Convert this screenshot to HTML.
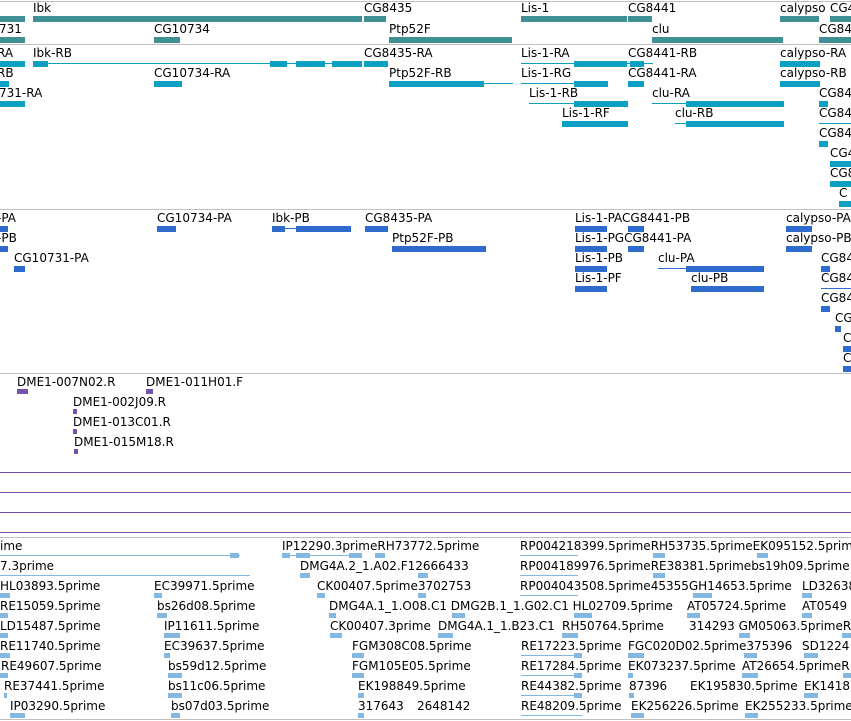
<!DOCTYPE html>
<html><head><meta charset="utf-8"><style>
body{margin:0;width:851px;height:721px;overflow:hidden;background:#fff;position:relative;font-family:"DejaVu Sans","Liberation Sans",sans-serif}
.t{position:absolute;font-size:12px;line-height:14px;white-space:nowrap;color:#000}
.b{position:absolute;height:6px}
.l{position:absolute;height:1px}
.g{background:#3f9095}.x{background:#0ea0c2}.p{background:#2f6bcc}.u{background:#7552b0}.e{background:#84b8e0}
.h{position:absolute;left:0;width:851px;height:1px;background:#c0c0c0}
.v{position:absolute;left:0;width:851px;height:1px;background:#7552b0}
</style></head><body>
<div class="h" style="top:1px"></div>
<div class="h" style="top:44px"></div>
<div class="h" style="top:209px"></div>
<div class="h" style="top:373px"></div>
<div class="v" style="top:472px"></div>
<div class="v" style="top:492px"></div>
<div class="v" style="top:512px"></div>
<div class="v" style="top:532px"></div>
<div class="h" style="top:537px"></div>
<div class="h" style="top:719px"></div>

<!-- genes -->
<div class="t" style="left:33px;top:1px">Ibk</div>
<div class="t" style="left:364px;top:1px">CG8435</div>
<div class="t" style="left:521px;top:1px">Lis-1</div>
<div class="t" style="left:628px;top:1px">CG8441</div>
<div class="t" style="left:780px;top:1px">calypso</div>
<div class="t" style="left:830px;top:1px">CG4</div>
<div class="b g" style="left:0;width:25px;top:16px"></div>
<div class="b g" style="left:33px;width:329px;top:16px"></div>
<div class="b g" style="left:364px;width:22px;top:16px"></div>
<div class="b g" style="left:521px;width:106px;top:16px"></div>
<div class="b g" style="left:628px;width:24px;top:16px"></div>
<div class="b g" style="left:780px;width:39px;top:16px"></div>
<div class="b g" style="left:830px;width:21px;top:16px"></div>
<div class="t" style="left:-1px;top:22px">731</div>
<div class="t" style="left:154px;top:22px">CG10734</div>
<div class="t" style="left:389px;top:22px">Ptp52F</div>
<div class="t" style="left:652px;top:22px">clu</div>
<div class="t" style="left:819px;top:22px">CG84</div>
<div class="b g" style="left:0;width:25px;top:37px"></div>
<div class="b g" style="left:154px;width:26px;top:37px"></div>
<div class="b g" style="left:389px;width:123px;top:37px"></div>
<div class="b g" style="left:652px;width:131px;top:37px"></div>
<div class="b g" style="left:819px;width:32px;top:37px"></div>

<!-- transcripts -->
<div class="t" style="left:-3px;top:46px">RA</div>
<div class="t" style="left:33px;top:46px">Ibk-RB</div>
<div class="t" style="left:364px;top:46px">CG8435-RA</div>
<div class="t" style="left:521px;top:46px">Lis-1-RA</div>
<div class="t" style="left:628px;top:46px">CG8441-RB</div>
<div class="t" style="left:780px;top:46px">calypso-RA</div>
<div class="b x" style="left:0;width:25px;top:61px"></div>
<div class="l x" style="left:33px;width:329px;top:63px"></div>
<div class="b x" style="left:33px;width:15px;top:61px"></div>
<div class="b x" style="left:270px;width:17px;top:61px"></div>
<div class="b x" style="left:296px;width:29px;top:61px"></div>
<div class="b x" style="left:332px;width:30px;top:61px"></div>
<div class="b x" style="left:364px;width:24px;top:61px"></div>
<div class="l x" style="left:521px;width:132px;top:63px"></div>
<div class="b x" style="left:574px;width:53px;top:61px"></div>
<div class="b x" style="left:630px;width:14px;top:61px"></div>
<div class="b x" style="left:780px;width:40px;top:61px"></div>
<div class="t" style="left:-3px;top:66px">RB</div>
<div class="t" style="left:154px;top:66px">CG10734-RA</div>
<div class="t" style="left:389px;top:66px">Ptp52F-RB</div>
<div class="t" style="left:521px;top:66px">Lis-1-RG</div>
<div class="t" style="left:628px;top:66px">CG8441-RA</div>
<div class="t" style="left:780px;top:66px">calypso-RB</div>
<div class="b x" style="left:0;width:9px;top:81px"></div>
<div class="b x" style="left:154px;width:28px;top:81px"></div>
<div class="l x" style="left:389px;width:124px;top:83px"></div>
<div class="b x" style="left:389px;width:95px;top:81px"></div>
<div class="l x" style="left:521px;width:87px;top:83px"></div>
<div class="b x" style="left:574px;width:34px;top:81px"></div>
<div class="b x" style="left:628px;width:16px;top:81px"></div>
<div class="b x" style="left:780px;width:40px;top:81px"></div>
<div class="t" style="left:-1px;top:86px">731-RA</div>
<div class="t" style="left:529px;top:86px">Lis-1-RB</div>
<div class="t" style="left:652px;top:86px">clu-RA</div>
<div class="t" style="left:819px;top:86px">CG84</div>
<div class="b x" style="left:0;width:25px;top:101px"></div>
<div class="l x" style="left:529px;width:99px;top:103px"></div>
<div class="b x" style="left:574px;width:54px;top:101px"></div>
<div class="l x" style="left:652px;width:132px;top:103px"></div>
<div class="b x" style="left:686px;width:98px;top:101px"></div>
<div class="b x" style="left:819px;width:9px;top:101px"></div>
<div class="t" style="left:562px;top:106px">Lis-1-RF</div>
<div class="t" style="left:675px;top:106px">clu-RB</div>
<div class="t" style="left:819px;top:106px">CG84</div>
<div class="b x" style="left:562px;width:66px;top:121px"></div>
<div class="l x" style="left:675px;width:109px;top:123px"></div>
<div class="b x" style="left:686px;width:98px;top:121px"></div>
<div class="l x" style="left:819px;width:32px;top:123px"></div>
<div class="t" style="left:819px;top:126px">CG84</div>
<div class="b x" style="left:819px;width:9px;top:141px"></div>
<div class="t" style="left:830px;top:146px">CG4</div>
<div class="b x" style="left:830px;width:21px;top:161px"></div>
<div class="t" style="left:830px;top:166px">CG8</div>
<div class="b x" style="left:830px;width:21px;top:181px"></div>
<div class="t" style="left:839px;top:186px">C</div>
<div class="b x" style="left:839px;width:12px;top:201px"></div>

<!-- proteins -->
<div class="t" style="left:-3px;top:211px">-PA</div>
<div class="t" style="left:157px;top:211px">CG10734-PA</div>
<div class="t" style="left:272px;top:211px">Ibk-PB</div>
<div class="t" style="left:365px;top:211px">CG8435-PA</div>
<div class="t" style="left:575px;top:211px">Lis-1-PACG8441-PB</div>
<div class="t" style="left:786px;top:211px">calypso-PA</div>
<div class="b p" style="left:0;width:8px;top:226px"></div>
<div class="b p" style="left:157px;width:19px;top:226px"></div>
<div class="l p" style="left:272px;width:79px;top:228px"></div>
<div class="b p" style="left:272px;width:13px;top:226px"></div>
<div class="b p" style="left:296px;width:55px;top:226px"></div>
<div class="b p" style="left:365px;width:23px;top:226px"></div>
<div class="b p" style="left:575px;width:32px;top:226px"></div>
<div class="b p" style="left:628px;width:16px;top:226px"></div>
<div class="b p" style="left:786px;width:26px;top:226px"></div>
<div class="t" style="left:-3px;top:231px">-PB</div>
<div class="t" style="left:392px;top:231px">Ptp52F-PB</div>
<div class="t" style="left:575px;top:231px">Lis-1-PGCG8441-PA</div>
<div class="t" style="left:786px;top:231px">calypso-PB</div>
<div class="b p" style="left:0;width:8px;top:246px"></div>
<div class="b p" style="left:392px;width:94px;top:246px"></div>
<div class="b p" style="left:575px;width:32px;top:246px"></div>
<div class="b p" style="left:628px;width:16px;top:246px"></div>
<div class="b p" style="left:786px;width:26px;top:246px"></div>
<div class="t" style="left:14px;top:251px">CG10731-PA</div>
<div class="t" style="left:575px;top:251px">Lis-1-PB</div>
<div class="t" style="left:658px;top:251px">clu-PA</div>
<div class="t" style="left:821px;top:251px">CG84</div>
<div class="b p" style="left:14px;width:11px;top:266px"></div>
<div class="b p" style="left:575px;width:32px;top:266px"></div>
<div class="l p" style="left:658px;width:106px;top:268px"></div>
<div class="b p" style="left:686px;width:78px;top:266px"></div>
<div class="b p" style="left:821px;width:9px;top:266px"></div>
<div class="t" style="left:575px;top:271px">Lis-1-PF</div>
<div class="t" style="left:691px;top:271px">clu-PB</div>
<div class="t" style="left:821px;top:271px">CG84</div>
<div class="b p" style="left:575px;width:32px;top:286px"></div>
<div class="b p" style="left:691px;width:73px;top:286px"></div>
<div class="l p" style="left:821px;width:30px;top:288px"></div>
<div class="t" style="left:821px;top:291px">CG84</div>
<div class="b p" style="left:821px;width:9px;top:306px"></div>
<div class="t" style="left:835px;top:311px">CG</div>
<div class="b p" style="left:835px;width:6px;top:326px"></div>
<div class="t" style="left:843px;top:331px">C</div>
<div class="b p" style="left:843px;width:8px;top:346px"></div>
<div class="t" style="left:843px;top:351px">C</div>
<div class="b p" style="left:843px;width:8px;top:366px"></div>

<!-- DME -->
<div class="t" style="left:17px;top:375px">DME1-007N02.R</div>
<div class="t" style="left:146px;top:375px">DME1-011H01.F</div>
<div class="b u" style="left:17px;width:11px;top:389px;height:5px"></div>
<div class="b u" style="left:146px;width:7px;top:389px;height:5px"></div>
<div class="t" style="left:73px;top:395px">DME1-002J09.R</div>
<div class="b u" style="left:73px;width:4px;top:409px;height:5px"></div>
<div class="t" style="left:73px;top:415px">DME1-013C01.R</div>
<div class="b u" style="left:73px;width:4px;top:429px;height:5px"></div>
<div class="t" style="left:74px;top:435px">DME1-015M18.R</div>
<div class="b u" style="left:74px;width:4px;top:449px;height:5px"></div>

<!-- ESTs -->
<div class="t" style="left:0;top:539px">ime</div>
<div class="t" style="left:282px;top:539px">IP12290.3primeRH73772.5prime</div>
<div class="t" style="left:520px;top:539px">RP004218399.5primeRH53735.5primeEK095152.5prime</div>
<div class="l e" style="left:0;width:240px;top:555px"></div>
<div class="b e" style="left:230px;width:9px;top:553px;height:5px"></div>
<div class="l e" style="left:282px;width:80px;top:555px"></div>
<div class="b e" style="left:282px;width:8px;top:553px;height:5px"></div>
<div class="b e" style="left:296px;width:14px;top:553px;height:5px"></div>
<div class="b e" style="left:349px;width:13px;top:553px;height:5px"></div>
<div class="b e" style="left:375px;width:10px;top:553px;height:5px"></div>
<div class="l e" style="left:520px;width:58px;top:555px"></div>
<div class="b e" style="left:653px;width:12px;top:553px;height:5px"></div>
<div class="b e" style="left:757px;width:11px;top:553px;height:5px"></div>

<div class="t" style="left:0;top:559px">7.3prime</div>
<div class="t" style="left:300px;top:559px">DMG4A.2_1.A02.F12666433</div>
<div class="t" style="left:520px;top:559px">RP004189976.5primeRE38381.5primebs19h09.5prime</div>
<div class="l e" style="left:0;width:250px;top:575px"></div>
<div class="b e" style="left:300px;width:10px;top:573px;height:5px"></div>
<div class="b e" style="left:418px;width:10px;top:573px;height:5px"></div>
<div class="l e" style="left:520px;width:58px;top:575px"></div>
<div class="b e" style="left:653px;width:12px;top:573px;height:5px"></div>

<div class="t" style="left:0;top:579px">HL03893.5prime</div>
<div class="t" style="left:154px;top:579px">EC39971.5prime</div>
<div class="t" style="left:317px;top:579px">CK00407.5prime3702753</div>
<div class="t" style="left:520px;top:579px">RP004043508.5prime45355GH14653.5prime</div>
<div class="t" style="left:802px;top:579px">LD32638</div>
<div class="b e" style="left:0;width:10px;top:593px;height:5px"></div>
<div class="b e" style="left:154px;width:8px;top:593px;height:5px"></div>
<div class="b e" style="left:317px;width:8px;top:593px;height:5px"></div>
<div class="b e" style="left:418px;width:8px;top:593px;height:5px"></div>
<div class="l e" style="left:520px;width:58px;top:595px"></div>
<div class="b e" style="left:693px;width:19px;top:593px;height:5px"></div>
<div class="b e" style="left:802px;width:10px;top:593px;height:5px"></div>

<div class="t" style="left:0;top:599px">RE15059.5prime</div>
<div class="t" style="left:157px;top:599px">bs26d08.5prime</div>
<div class="t" style="left:329px;top:599px">DMG4A.1_1.O08.C1 DMG2B.1_1.G02.C1 HL02709.5prime</div>
<div class="t" style="left:687px;top:599px">AT05724.5prime</div>
<div class="t" style="left:802px;top:599px">AT0549</div>
<div class="b e" style="left:0;width:8px;top:613px;height:5px"></div>
<div class="b e" style="left:157px;width:10px;top:613px;height:5px"></div>
<div class="b e" style="left:329px;width:7px;top:613px;height:5px"></div>
<div class="b e" style="left:452px;width:13px;top:613px;height:5px"></div>
<div class="b e" style="left:574px;width:18px;top:613px;height:5px"></div>
<div class="b e" style="left:687px;width:13px;top:613px;height:5px"></div>
<div class="b e" style="left:802px;width:10px;top:613px;height:5px"></div>

<div class="t" style="left:0;top:619px">LD15487.5prime</div>
<div class="t" style="left:164px;top:619px">IP11611.5prime</div>
<div class="t" style="left:330px;top:619px">CK00407.3prime</div>
<div class="t" style="left:438px;top:619px">DMG4A.1_1.B23.C1</div>
<div class="t" style="left:562px;top:619px">RH50764.5prime</div>
<div class="t" style="left:689px;top:619px">314293 GM05063.5primeR</div>
<div class="b e" style="left:0;width:8px;top:633px;height:5px"></div>
<div class="b e" style="left:164px;width:16px;top:633px;height:5px"></div>
<div class="b e" style="left:330px;width:12px;top:633px;height:5px"></div>
<div class="b e" style="left:438px;width:15px;top:633px;height:5px"></div>
<div class="b e" style="left:562px;width:16px;top:633px;height:5px"></div>
<div class="b e" style="left:739px;width:11px;top:633px;height:5px"></div>
<div class="b e" style="left:842px;width:9px;top:633px;height:5px"></div>

<div class="t" style="left:0;top:639px">RE11740.5prime</div>
<div class="t" style="left:164px;top:639px">EC39637.5prime</div>
<div class="t" style="left:352px;top:639px">FGM308C08.5prime</div>
<div class="t" style="left:521px;top:639px">RE17223.5prime</div>
<div class="t" style="left:628px;top:639px">FGC020D02.5prime375396</div>
<div class="t" style="left:802px;top:639px">SD1224</div>
<div class="b e" style="left:0;width:10px;top:653px;height:5px"></div>
<div class="b e" style="left:164px;width:6px;top:653px;height:5px"></div>
<div class="b e" style="left:352px;width:12px;top:653px;height:5px"></div>
<div class="l e" style="left:521px;width:61px;top:655px"></div>
<div class="b e" style="left:574px;width:8px;top:653px;height:5px"></div>
<div class="b e" style="left:628px;width:16px;top:653px;height:5px"></div>
<div class="b e" style="left:744px;width:13px;top:653px;height:5px"></div>
<div class="b e" style="left:804px;width:14px;top:653px;height:5px"></div>

<div class="t" style="left:1px;top:659px">RE49607.5prime</div>
<div class="t" style="left:168px;top:659px">bs59d12.5prime</div>
<div class="t" style="left:352px;top:659px">FGM105E05.5prime</div>
<div class="t" style="left:521px;top:659px">RE17284.5prime</div>
<div class="t" style="left:628px;top:659px">EK073237.5prime</div>
<div class="t" style="left:742px;top:659px">AT26654.5primeR</div>
<div class="b e" style="left:0;width:8px;top:673px;height:5px"></div>
<div class="b e" style="left:168px;width:14px;top:673px;height:5px"></div>
<div class="b e" style="left:352px;width:12px;top:673px;height:5px"></div>
<div class="l e" style="left:521px;width:61px;top:675px"></div>
<div class="b e" style="left:574px;width:8px;top:673px;height:5px"></div>
<div class="b e" style="left:628px;width:5px;top:673px;height:5px"></div>
<div class="b e" style="left:742px;width:16px;top:673px;height:5px"></div>
<div class="b e" style="left:843px;width:8px;top:673px;height:5px"></div>

<div class="t" style="left:4px;top:679px">RE37441.5prime</div>
<div class="t" style="left:168px;top:679px">bs11c06.5prime</div>
<div class="t" style="left:358px;top:679px">EK198849.5prime</div>
<div class="t" style="left:521px;top:679px">RE44382.5prime</div>
<div class="t" style="left:629px;top:679px">87396</div>
<div class="t" style="left:690px;top:679px">EK195830.5prime</div>
<div class="t" style="left:804px;top:679px">EK1418</div>
<div class="b e" style="left:4px;width:3px;top:693px;height:5px"></div>
<div class="b e" style="left:168px;width:14px;top:693px;height:5px"></div>
<div class="b e" style="left:358px;width:6px;top:693px;height:5px"></div>
<div class="l e" style="left:521px;width:61px;top:695px"></div>
<div class="b e" style="left:574px;width:8px;top:693px;height:5px"></div>
<div class="b e" style="left:629px;width:5px;top:693px;height:5px"></div>
<div class="b e" style="left:804px;width:14px;top:693px;height:5px"></div>

<div class="t" style="left:10px;top:699px">IP03290.5prime</div>
<div class="t" style="left:171px;top:699px">bs07d03.5prime</div>
<div class="t" style="left:358px;top:699px">317643</div>
<div class="t" style="left:417px;top:699px">2648142</div>
<div class="t" style="left:521px;top:699px">RE48209.5prime</div>
<div class="t" style="left:631px;top:699px">EK256226.5prime</div>
<div class="t" style="left:745px;top:699px">EK255233.5prime</div>
<div class="b e" style="left:10px;width:15px;top:713px;height:5px"></div>
<div class="b e" style="left:171px;width:9px;top:713px;height:5px"></div>
<div class="b e" style="left:358px;width:6px;top:713px;height:5px"></div>
<div class="l e" style="left:521px;width:61px;top:715px"></div>
<div class="b e" style="left:631px;width:13px;top:713px;height:5px"></div>
<div class="b e" style="left:745px;width:13px;top:713px;height:5px"></div>
</body></html>
